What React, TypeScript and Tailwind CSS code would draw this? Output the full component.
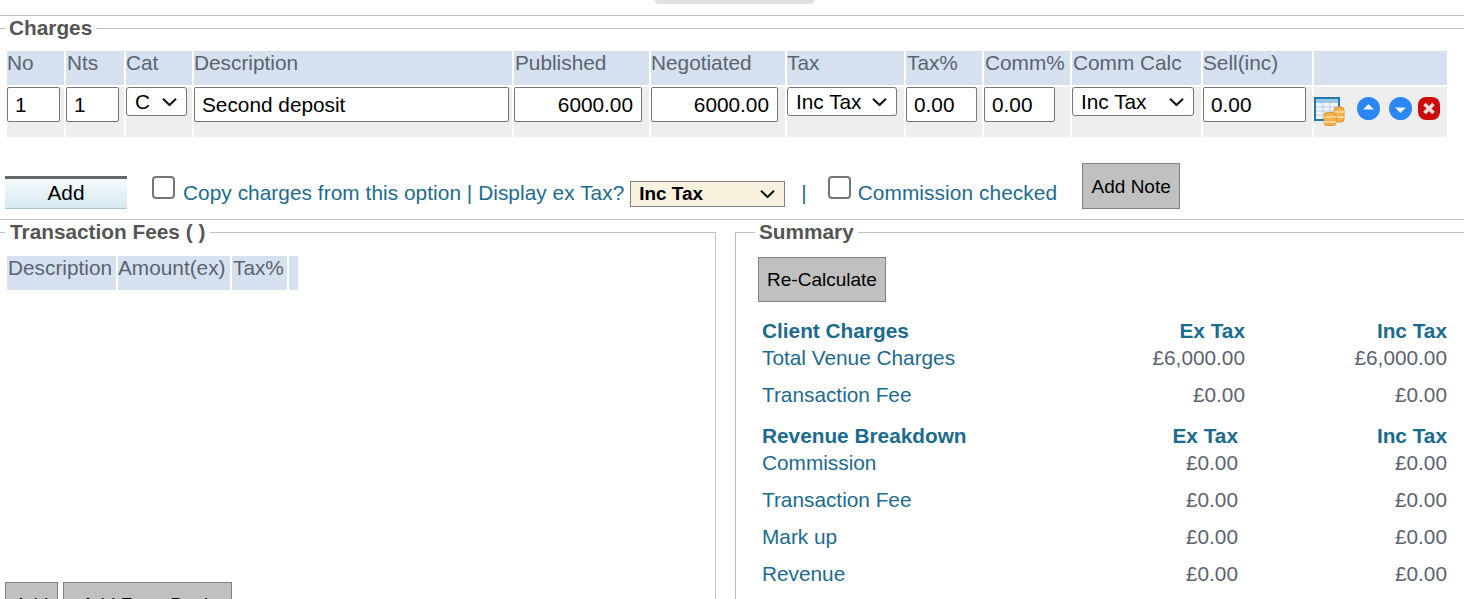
import type { ReactNode } from 'react';

const HEADERS = [
  { label: 'No', cls: '' },
  { label: 'Nts', cls: 'pl-px' },
  { label: 'Cat', cls: '' },
  { label: 'Description', cls: '' },
  { label: 'Published', cls: 'pl-px' },
  { label: 'Negotiated', cls: '' },
  { label: 'Tax', cls: '' },
  { label: 'Tax%', cls: 'pl-px' },
  { label: 'Comm%', cls: 'pl-px' },
  { label: 'Comm Calc', cls: 'pl-px' },
  { label: 'Sell(inc)', cls: '' },
  { label: '', cls: '' },
];

function TextBox({ value, className }: { value: string; className: string }) {
  return (
    <input
      defaultValue={value}
      className={`h-[35px] rounded-[2px] border border-[#767676] bg-white pl-[7px] pr-[8px] text-[20.8px] text-black ${className}`}
    />
  );
}

function Chevron() {
  return (
    <svg width="15" height="9" viewBox="0 0 15 9" className="pointer-events-none absolute right-[10px] top-1/2 -translate-y-1/2" fill="none">
      <path d="M1 1.2L7.5 7.5L14 1.2" stroke="#111111" strokeWidth="2" />
    </svg>
  );
}

function Picker({ value, className }: { value: string; className: string }) {
  return (
    <div className={`relative h-[29px] ${className}`}>
      <select
        defaultValue={value}
        className="h-full w-full appearance-none rounded-[3px] border border-[#767676] bg-white pl-[8px] text-[20.8px] text-black"
      >
        <option>{value}</option>
      </select>
      <Chevron />
    </div>
  );
}

function BodyCell({ children }: { children: ReactNode }) {
  return <div className="flex items-start bg-[#eeeeee]">{children}</div>;
}

function TableCoinsIcon() {
  return (
    <svg width="31" height="29" viewBox="0 0 31 29" className="mt-[10px] shrink-0">
      <rect x="1" y="1" width="24" height="22" fill="#f2f6fa" stroke="#2378ae" strokeWidth="2" />
      <rect x="2" y="2" width="22" height="4" fill="#9cc8e6" />
      <path d="M2 10h22M2 14h22M2 18h22M9 6v16M16 6v16" stroke="#b4cfe4" strokeWidth="1" />
      <rect x="20" y="10" width="10" height="15" rx="3" fill="#f3b14e" stroke="#e0962e" />
      <path d="M20 15h10M20 20h10" stroke="#fbdc9c" strokeWidth="1.5" />
      <rect x="10" y="15.5" width="12" height="13" rx="3" fill="#f3b14e" stroke="#e0962e" />
      <path d="M10 20h12M10 25h12" stroke="#fbdc9c" strokeWidth="1.5" />
    </svg>
  );
}

function ArrowIcon({ up }: { up?: boolean }) {
  return (
    <svg width="23" height="23" viewBox="0 0 23 23" className="mt-[10px] shrink-0">
      <circle cx="11.5" cy="11.5" r="11.5" fill="#2b86f8" />
      <path d={up ? 'M6 12.5L11.5 7L17 12.5Z' : 'M6 10.5L11.5 16L17 10.5Z'} fill="#eef5ff" />
    </svg>
  );
}

function RemoveIcon() {
  return (
    <svg width="22" height="23" viewBox="0 0 22 23" className="mt-[10px] shrink-0">
      <rect x="0" y="0" width="22" height="23" rx="8" fill="#cc0a0a" />
      <path d="M6.5 7L15.5 16M15.5 7L6.5 16" stroke="#f6dede" strokeWidth="3.6" />
    </svg>
  );
}

function GreyButton({ label, className }: { label: string; className: string }) {
  return (
    <button className={`h-[45px] shrink-0 border border-[#808080] bg-[#c0c0c0] text-[19px] text-black ${className}`}>
      {label}
    </button>
  );
}

function Tick({ className }: { className: string }) {
  return (
    <input
      type="checkbox"
      className={`h-[23px] w-[23px] shrink-0 appearance-none rounded-[4px] border-2 border-[#767676] bg-white ${className}`}
    />
  );
}

function SummaryRow({ cols, label, ex, inc }: { cols: string; label: string; ex: string; inc: string }) {
  return (
    <div className={`grid h-[37px] ${cols}`}>
      <span className="text-[#1b6b8f]">{label}</span>
      <span className="text-right text-[#5c6370]">{ex}</span>
      <span className="text-right text-[#5c6370]">{inc}</span>
    </div>
  );
}

function SummaryHead({ cols, label }: { cols: string; label: string }) {
  return (
    <div className={`grid h-[27px] font-bold text-[#1b6b8f] ${cols}`}>
      <span>{label}</span>
      <span className="text-right">Ex Tax</span>
      <span className="text-right">Inc Tax</span>
    </div>
  );
}

export default function App() {
  const clientCols = 'grid-cols-[281px_202px_202px]';
  const revenueCols = 'grid-cols-[274px_202px_209px]';

  return (
    <div className="h-[599px] w-[1464px] overflow-hidden bg-white font-['Liberation_Sans',Arial,sans-serif] text-[20.8px] leading-[24px]">
      <div className="ml-[655px] h-[4px] w-[159px] rounded-b-[4px] bg-[#e0e0e0]" />
      <div className="mt-[11px] h-px bg-[#c0c0c0]" />

      {/* Charges */}
      <fieldset className="h-[193px] border-t border-[#c0c0c0]">
        <legend className="ml-[5px] px-[4px] font-bold text-[#555555]">Charges</legend>

        <div className="ml-[7px] mt-[11px] grid grid-cols-[57px_58px_66px_318px_135px_134px_117px_76px_86px_129px_109px_133px] grid-rows-[34px_50px] gap-[2px]">
          {HEADERS.map((h, i) => (
            <div key={i} className={`bg-[#d5e1ef] text-[#5c6370] ${h.cls}`}>
              {h.label}
            </div>
          ))}
          <BodyCell><TextBox value="1" className="w-[53px]" /></BodyCell>
          <BodyCell><TextBox value="1" className="w-[53px]" /></BodyCell>
          <BodyCell><Picker value="C" className="w-[61px]" /></BodyCell>
          <BodyCell><TextBox value="Second deposit" className="w-[315px]" /></BodyCell>
          <BodyCell><TextBox value="6000.00" className="w-[128px] text-right" /></BodyCell>
          <BodyCell><TextBox value="6000.00" className="w-[127px] text-right" /></BodyCell>
          <BodyCell><Picker value="Inc Tax" className="w-[110px]" /></BodyCell>
          <BodyCell><TextBox value="0.00" className="w-[71px]" /></BodyCell>
          <BodyCell><TextBox value="0.00" className="w-[71px]" /></BodyCell>
          <BodyCell><Picker value="Inc Tax" className="w-[122px]" /></BodyCell>
          <BodyCell><TextBox value="0.00" className="w-[103px]" /></BodyCell>
          <BodyCell>
            <TableCoinsIcon />
            <span className="ml-[12px]"><ArrowIcon up /></span>
            <span className="ml-[9px]"><ArrowIcon /></span>
            <span className="ml-[6px]"><RemoveIcon /></span>
          </BodyCell>
        </div>

        <div className="mt-[26px] flex h-[46px] items-start text-[#1b6b8f]">
          <button className="ml-[5px] mt-[13px] h-[33px] w-[122px] shrink-0 border-t-[3px] border-b border-t-[#666666] border-b-[#a8c8d8] bg-linear-to-b from-[#f6fbfd] to-[#d6e8f0] pb-[2px] text-black">
            Add
          </button>
          <Tick className="ml-[25px] mt-[13px]" />
          <span className="ml-[8px] mt-[18px] whitespace-nowrap tracking-[0.06px]">Copy charges from this option | Display ex Tax?</span>
          <div className="relative ml-[6px] mt-[18px] h-[26px] w-[155px] shrink-0">
            <select
              defaultValue="Inc Tax"
              className="h-full w-full appearance-none rounded-none border border-[#808080] bg-[#f8f1de] pl-[8px] text-[18.9px] font-bold text-black"
            >
              <option>Inc Tax</option>
            </select>
            <Chevron />
          </div>
          <span className="ml-[16px] mt-[18px]">|</span>
          <Tick className="ml-[21px] mt-[13px]" />
          <span className="ml-[7px] mt-[18px] whitespace-nowrap tracking-[0.1px]">Commission checked</span>
          <button className="ml-[25px] h-[46px] w-[98px] shrink-0 border border-[#808080] bg-[#c0c0c0] pt-px text-[19px] text-black">
            Add Note
          </button>
        </div>
      </fieldset>

      <div className="mt-[10px] h-px bg-[#c0c0c0]" />

      <div className="flex h-[379px] items-start">
        {/* Transaction fees */}
        <fieldset className="h-full w-[716px] shrink-0 border-t border-r border-[#c0c0c0]">
          <legend className="ml-[5px] px-[5px] font-bold text-[#555555]">Transaction Fees ( )</legend>
          <div className="ml-[7px] mt-[12px] grid h-[34px] w-[291px] grid-cols-[109px_112px_55px_9px] gap-[2px] text-[#5c6370]">
            <div className="bg-[#d5e1ef] pl-px">Description</div>
            <div className="bg-[#d5e1ef]">Amount(ex)</div>
            <div className="bg-[#d5e1ef] pl-px">Tax%</div>
            <div className="bg-[#d5e1ef]" />
          </div>
          <div className="ml-[5px] mt-[292px] flex gap-[5px]">
            <GreyButton label="Add" className="w-[53px]" />
            <GreyButton label="Add From Book" className="w-[169px]" />
          </div>
        </fieldset>

        {/* Summary */}
        <fieldset className="ml-[19px] h-full w-[729px] shrink-0 border-t border-l border-[#c0c0c0]">
          <legend className="ml-[19px] px-[4px] font-bold text-[#555555]">Summary</legend>
          <GreyButton label="Re-Calculate" className="ml-[22px] mt-[13px] block w-[128px]" />
          <div className="ml-[26px] mt-[17px]">
            <SummaryHead cols={clientCols} label="Client Charges" />
            <SummaryRow cols={clientCols} label="Total Venue Charges" ex="£6,000.00" inc="£6,000.00" />
            <SummaryRow cols={clientCols} label="Transaction Fee" ex="£0.00" inc="£0.00" />
            <div className="h-[4px]" />
            <SummaryHead cols={revenueCols} label="Revenue Breakdown" />
            <SummaryRow cols={revenueCols} label="Commission" ex="£0.00" inc="£0.00" />
            <SummaryRow cols={revenueCols} label="Transaction Fee" ex="£0.00" inc="£0.00" />
            <SummaryRow cols={revenueCols} label="Mark up" ex="£0.00" inc="£0.00" />
            <SummaryRow cols={revenueCols} label="Revenue" ex="£0.00" inc="£0.00" />
          </div>
        </fieldset>
      </div>
    </div>
  );
}
